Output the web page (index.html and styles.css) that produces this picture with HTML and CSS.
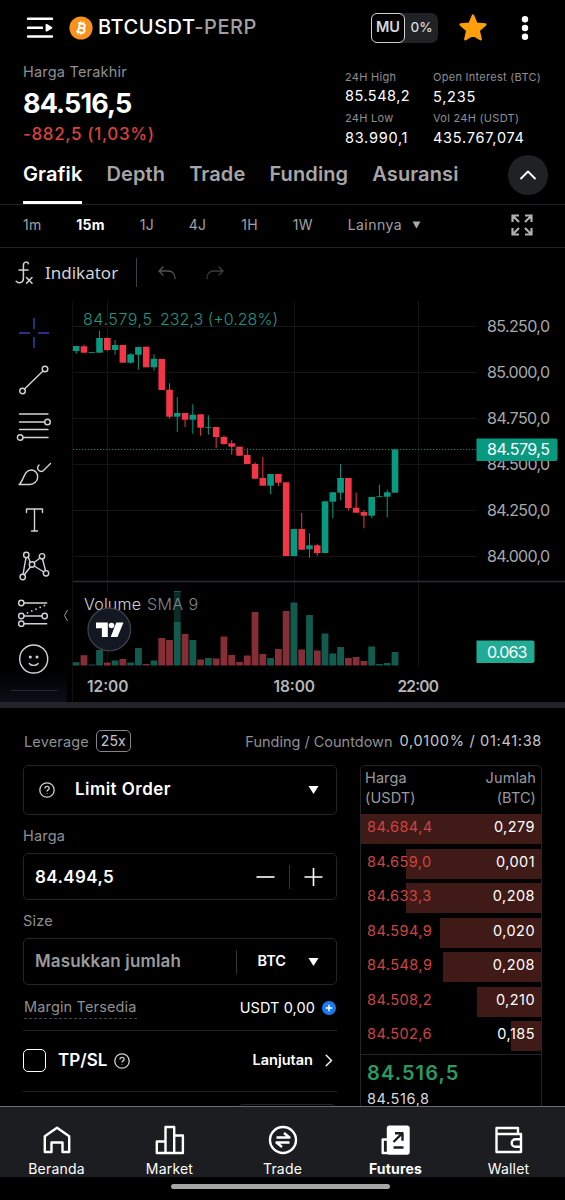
FILE: index.html
```html
<!DOCTYPE html>
<html lang="id">

<head>
    <meta charset="UTF-8">
    <meta name="viewport" content="width=device-width, initial-scale=1.0">
    <title>BTCUSDT-PERP</title>
    <link rel="stylesheet" href="styles.css">
</head>

<body>

    <header class="topbar">
        <svg class="menu-icon" width="28" height="22" viewBox="0 0 28 22">
            <path d="M2 1.8h24M2 10.7h14M2 19.5h24" stroke="#fff" stroke-width="2.4" stroke-linecap="round" />
            <path d="M20.500 7.700v6l5-3z" fill="#fff" stroke="#fff" stroke-width="1.800" stroke-linejoin="round" />
        </svg>
        <svg class="coin-icon" width="24" height="24" viewBox="0 0 24 24">
            <circle cx="12" cy="12" r="11.600" fill="#f7931a" />
            <g transform="rotate(13 12 12)" fill="none" stroke="#fff" stroke-width="1.9">
                <path d="M8 7.600h5.200a2 2 0 0 1 0 4.200H9.800M9.800 11.800h4a2.300 2.300 0 0 1 0 4.600H8M9.900 7.600v8.800" />
                <path d="M10.700 5.200v2.400M13.300 5.200v2.400M10.700 16.400v2.400M13.300 16.400v2.400" stroke-width="1.300" />
            </g>
        </svg>
        <h1 class="pair">BTCUSDT<span>-PERP</span></h1>
        <div class="mu"><b>MU</b><span>0%</span></div>
        <svg class="star" width="30" height="30" viewBox="0 0 30 30">
            <path d="M15 2.500l3.500 8.200 8.900.8-6.700 5.900 2 8.800-7.700-4.600-7.700 4.600 2-8.800-6.700-5.900 8.900-.8z" fill="#ff9f0a" stroke="#ff9f0a" stroke-width="2.400" stroke-linejoin="round" />
        </svg>
        <svg class="dots" width="8" height="26" viewBox="0 0 8 26">
            <g fill="#fff"><circle cx="4" cy="4.300" r="3.200" /><circle cx="4" cy="13" r="3.200" /><circle cx="4" cy="21.700" r="3.200" /></g>
        </svg>
    </header>

    <section class="summary">
        <div class="last">
            <div class="last-label">Harga Terakhir</div>
            <div class="last-price">84.516,5</div>
            <div class="last-change">-882,5 (1,03%)</div>
        </div>
        <div class="stats">
            <div class="stat"><span>24H High</span><b class="up">85.548,2</b></div>
            <div class="stat"><span>Open Interest (BTC)</span><b>5,235</b></div>
            <div class="stat"><span>24H Low</span><b>83.990,1</b></div>
            <div class="stat"><span>Vol 24H (USDT)</span><b>435.767,074</b></div>
        </div>
    </section>

    <nav class="tabs">
        <a class="tab active">Grafik</a>
        <a class="tab">Depth</a>
        <a class="tab">Trade</a>
        <a class="tab">Funding</a>
        <a class="tab">Asuransi</a>
        <button class="collapse">
            <svg width="18" height="10" viewBox="0 0 18 10"><path d="M2 8.500l7-7 7 7" fill="none" stroke="#fff" stroke-width="1.800" stroke-linecap="round" stroke-linejoin="round" /></svg>
        </button>
    </nav>

    <div class="intervals">
        <span>1m</span>
        <span class="active">15m</span>
        <span>1J</span>
        <span>4J</span>
        <span>1H</span>
        <span>1W</span>
        <span class="more">Lainnya</span>
        <svg width="9" height="8" viewBox="0 0 9 8"><path d="M.500.500h8l-4 7z" fill="#a9a9ab" /></svg>
        <svg class="expand" width="24" height="24" viewBox="0 0 24 24" fill="none" stroke="#b0b0b2" stroke-width="2.200">
            <path d="M2.500 9V2.500H9M2.500 2.500l6.500 6.500M15 2.500h6.500V9M21.500 2.500L15 9M2.500 15v6.500H9M2.500 21.500L9 15M15 21.500h6.500V15M21.500 21.500L15 15" />
        </svg>
    </div>

    <div class="chart-bar">
        <svg width="20" height="26" viewBox="0 0 20 26" fill="none" stroke="#d2d3d6" stroke-width="1.500" stroke-linecap="round">
            <path d="M13.500 3.800C12.500 1.200 8.400 1.400 8.400 5.500v13c0 4.500-5 5.300-7.200 2.800M4 10h9M11.500 17.500l5.500 5.800M17 17.500l-5.500 5.800" />
        </svg>
        <span class="indicator">Indikator</span>
        <i class="sep"></i>
        <svg class="undo" width="18" height="14" viewBox="0 0 18 14" fill="none" stroke="#55565a" stroke-width="1.300" stroke-linecap="round">
            <path d="M5 1L1 5l4 4M1 5h9.500c4 0 6.500 3 6.500 7.500" />
        </svg>
        <svg width="18" height="14" viewBox="0 0 18 14" fill="none" stroke="#3c3d41" stroke-width="1.300" stroke-linecap="round">
            <path d="M13 1l4 4-4 4M17 5H7.500C3.500 5 1 8 1 12.500" />
        </svg>
    </div>

    <div class="chart-area">
        <aside class="tools">
            <svg viewBox="0 0 36 36" class="cross"><path d="M18 3v11M18 22v11M3 18h11M22 18h11" /></svg>
            <svg viewBox="0 0 36 36"><path d="M8.500 27L27 9" /><circle cx="6.500" cy="29" r="2.800" /><circle cx="29" cy="7" r="2.800" /></svg>
            <svg viewBox="0 0 36 36"><path d="M3.500 6H32M3.500 14h25.200M3.500 21.500H32M7 29.500h25" /><circle cx="31.500" cy="14" r="2.800" /><circle cx="4.200" cy="29.500" r="2.800" /></svg>
            <svg viewBox="0 0 36 36"><path d="M3 29.500C8 26 7.500 15 15.300 15c3.700 0 6.400 3 6.400 6.700 0 4.400-3.500 7.800-8 7.800zM34.500 8.500L27.500 15.500c-3 2.700-8.500-1.500-4.500-5.500" /></svg>
            <svg viewBox="0 0 36 36"><path d="M10.500 11.500V8h16v3.500M18.500 8v22M15.500 30h6" /></svg>
            <svg viewBox="0 0 36 36"><path d="M10 9.700L7 26.300M12.200 9l2 5M24 10l-5.800 4.500M14.500 18.700L8.300 26.800M18.200 18l9.500 6M26.500 11l3 11.700" /><circle cx="10.300" cy="7" r="2.700" /><circle cx="26" cy="8.300" r="2.700" /><circle cx="16" cy="16.500" r="2.700" /><circle cx="6.700" cy="29" r="2.700" /><circle cx="30" cy="25.300" r="2.700" /></svg>
            <svg viewBox="0 0 36 36"><path d="M8 9h22.700M8 22h18M8 29.700h22.700" /><path d="M11.500 18.800L28.500 11.500" stroke-width="1.700" stroke-dasharray=".1 4.500" /><circle cx="5.300" cy="9" r="2.700" /><circle cx="5.300" cy="22" r="2.700" /><circle cx="28.700" cy="22" r="2.700" /><circle cx="5.300" cy="29.700" r="2.700" /></svg>
            <svg viewBox="0 0 36 36"><circle cx="17.700" cy="18" r="14" /><path d="M13.300 22.500c1.800 2.500 7 2.500 8.800 0" /><g class="eyes"><circle cx="14.300" cy="16" r="1.500" /><circle cx="21" cy="16" r="1.500" /></g></svg>
            <i class="tools-line"></i>
        </aside>
        <!-- the viewBox starts at the chart's own corner in page units -->
        <svg class="chart" width="503" height="401" viewBox="62 301 503 401">
            <path d="M72.500 301V702" stroke="#0f1012" />
            <path d="M73 326.500H476M73 372.500H476M73 418.500H476M73 464.500H476M73 510.500H476M73 556.500H476M107.500 301V666M294.500 301V666M418.500 301V666" stroke="#141517" />
            <path d="M73 581.500H565" stroke="#2b2c31" stroke-width="1.600" />
            <g id="volume"></g>
            <rect x="80" y="592" width="122" height="30" fill="#000" opacity=".5" />
            <g id="candles"></g>
            <path d="M73 449.500H476" stroke="#14806c" stroke-dasharray="1.200 1.800" />
            <path d="M67.500 610l-3 5.500 3 5.500" fill="none" stroke="#9b9ca0" />

            <g class="legend">
                <text x="83" y="325" textLength="69" fill="#1c9a83">84.579,5</text>
                <text x="160" y="325" textLength="118" fill="#1c9a83">232,3 (+0.28%)</text>
                <text x="84" y="610" textLength="57" fill="#d2d3d6">Volume</text>
                <text x="147" y="610" textLength="51" fill="#85868b">SMA 9</text>
            </g>

            <circle cx="109.300" cy="629.500" r="21.300" fill="#131722" stroke="#3f4148" stroke-width="1.300" />
            <g fill="#fff">
                <path d="M96 622.600h11.800v14.500h-5.900v-8.800H96z" />
                <circle cx="111.500" cy="625.500" r="2.800" />
                <path d="M116.300 622.600h7.200l-6 14.500h-6.800z" />
            </g>

            <g class="prices">
                <text x="487" y="332" textLength="63">85.250,0</text>
                <text x="487" y="378" textLength="63">85.000,0</text>
                <text x="487" y="424" textLength="63">84.750,0</text>
                <text x="487" y="470" textLength="63">84.500,0</text>
                <text x="487" y="516" textLength="63">84.250,0</text>
                <text x="487" y="562" textLength="63">84.000,0</text>
            </g>
            <path d="M476.500 438.500h79a2 2 0 0 1 2 2v18.500a2 2 0 0 1-2 2h-79z" fill="#089981" />
            <text class="tag" x="487" y="455.200" textLength="63">84.579,5</text>
            <path d="M476.500 640.500h56a2 2 0 0 1 2 2V661a2 2 0 0 1-2 2h-56z" fill="#22ab94" />
            <text class="tag" x="487" y="657.500" textLength="40.500">0.063</text>

            <g class="times">
                <text x="87" y="691.500" textLength="41.500">12:00</text>
                <text x="273.500" y="691.500" textLength="41.500">18:00</text>
                <text x="397.500" y="691.500" textLength="41.500">22:00</text>
            </g>
        </svg>
    </div>

    <main class="order">
        <div class="order-head">
            <span class="lev">Leverage</span>
            <span class="lev-value">25x</span>
            <span class="funding">Funding / Countdown</span>
            <span class="countdown">0,0100% / 01:41:38</span>
        </div>

        <div class="columns">
            <div class="form">
                <div class="field type">
                    <svg class="help" viewBox="0 0 16 16"><circle cx="8" cy="8" r="7.200" /><path d="M6 6.400c0-2.600 4.100-2.600 4.100 0 0 1.500-2.100 1.500-2.100 3.200M8 11.300v.500" /></svg>
                    <span class="type-name">Limit Order</span>
                    <svg class="caret" viewBox="0 0 12 10"><path d="M1 1h10L6 9z" /></svg>
                </div>
                <label class="label">Harga</label>
                <div class="field">
                    <span class="value">84.494,5</span>
                    <svg class="step" viewBox="0 0 20 20"><path d="M.500 10h19" /></svg>
                    <i class="split"></i>
                    <svg class="step" viewBox="0 0 20 20"><path d="M.500 10h19M10 .500v19" /></svg>
                </div>
                <label class="label">Size</label>
                <div class="field size">
                    <span class="placeholder">Masukkan jumlah</span>
                    <i class="split"></i>
                    <span class="unit">BTC</span>
                    <svg class="caret" viewBox="0 0 12 10"><path d="M1 1h10L6 9z" /></svg>
                </div>
                <div class="margin">
                    <span class="margin-name">Margin Tersedia</span>
                    <span class="margin-value">USDT 0,00</span>
                    <svg width="14" height="14" viewBox="0 0 14 14"><circle cx="7" cy="7" r="7" fill="#1a7bf0" /><path d="M7 3.700v6.600M3.700 7h6.600" stroke="#fff" stroke-width="1.500" /></svg>
                </div>
                <div class="tpsl">
                    <i class="check"></i>
                    <span class="tpsl-name">TP/SL</span>
                    <svg class="help" viewBox="0 0 16 16"><circle cx="8" cy="8" r="7.200" /><path d="M6 6.400c0-2.600 4.100-2.600 4.100 0 0 1.500-2.100 1.500-2.100 3.200M8 11.300v.500" /></svg>
                    <span class="advanced">Lanjutan</span>
                    <svg width="8" height="13" viewBox="0 0 8 13"><path d="M1.200 1.200l5.300 5.300-5.300 5.300" fill="none" stroke="#fff" stroke-width="1.400" stroke-linecap="round" /></svg>
                </div>
                <div class="next"></div>
            </div>

            <div class="book">
                <div class="book-head">
                    <span>Harga<br>(USDT)</span>
                    <span class="right">Jumlah<br>(BTC)</span>
                </div>
                <div class="ask" style="background-size: 100% 100%"><span>84.684,4</span><b>0,279</b></div>
                <div class="ask" style="background-size: 75% 100%"><span>84.659,0</span><b>0,001</b></div>
                <div class="ask" style="background-size: 75% 100%"><span>84.633,3</span><b>0,208</b></div>
                <div class="ask" style="background-size: 56.3% 100%"><span>84.594,9</span><b>0,020</b></div>
                <div class="ask" style="background-size: 54.6% 100%"><span>84.548,9</span><b>0,208</b></div>
                <div class="ask" style="background-size: 35.6% 100%"><span>84.508,2</span><b>0,210</b></div>
                <div class="ask" style="background-size: 16.8% 100%"><span>84.502,6</span><b>0,185</b></div>
                <div class="mid">
                    <div class="mid-price">84.516,5</div>
                    <div class="mark">84.516,8</div>
                </div>
            </div>
        </div>
    </main>

    <footer class="bottom-nav">
        <a>
            <svg viewBox="0 0 32 32"><path d="M3.800 28V12.300L16 3.800l12.200 8.500V28h-6.700v-9.500h-11V28z" /></svg>
            <span>Beranda</span>
        </a>
        <a>
            <svg viewBox="0 0 32 32"><path d="M2.800 29V17.500h8.700V29zM11.500 29V3h8.700v26zM20.200 29V11.500h8.700V29z" /></svg>
            <span>Market</span>
        </a>
        <a>
            <svg viewBox="0 0 32 32"><circle cx="16" cy="16" r="13" /><path d="M9.500 13.500h13L17 9M22.500 18.500h-13L15 23" /></svg>
            <span>Trade</span>
        </a>
        <a class="active">
            <svg viewBox="0 0 32 32"><path d="M7 15.500H2.700V29H10" /><rect x="8" y="2.800" width="20.500" height="26.700" rx="1.500" fill="#fff" /><path class="cut" d="M13.500 18l8.500-8.500M15 9.200h7.500v7.500M13.500 23.500h10" /></svg>
            <span>Futures</span>
        </a>
        <a>
            <svg viewBox="0 0 32 32"><path d="M25 10V4H3.500v24H28V10H3.500M28 15.200h-5.500a3.800 3.800 0 0 0 0 7.600H28" /></svg>
            <span>Wallet</span>
        </a>
    </footer>
    <div class="home-bar"><i></i></div>

    <script src="chart.js"></script>
</body>

</html>
```
FILE: styles.css
```css
* {
    margin: 0;
    padding: 0;
    box-sizing: border-box;
    font-family: Inter, sans-serif;
}

body {
    width: 565px;
    height: 1200px;
    overflow: hidden;
    background: #000;
    color: #fff;
}

svg {
    display: block;
    flex: none;
}

span, b, i {
    white-space: nowrap;
}

/* header */
.topbar {
    display: flex;
    align-items: center;
    height: 56px;
    padding: 0 36px 0 26px;
}

.coin-icon {
    margin-left: 14.5px;
}

.pair {
    margin: -2px 0 0 5.5px;
    font-size: 20px;
    font-weight: 500;
    letter-spacing: 0.55px;
}

.pair span {
    color: #a0a0a2;
}

.mu {
    display: flex;
    align-items: center;
    width: 67px;
    height: 30px;
    margin-left: auto;
    border-radius: 7px;
    background: #202226;
    color: #d8d8da;
    font-size: 14.5px;
}

.mu b {
    width: 34px;
    height: 30px;
    border: 1px solid #d0d0d2;
    border-radius: 6px;
    background: #000;
    font-weight: 600;
    line-height: 26px;
    text-align: center;
}

.mu span {
    width: 33px;
    font-size: 13.5px;
    font-weight: 500;
    line-height: 16px;
    margin-bottom: 2px;
    text-align: center;
}

.star {
    margin-left: 20px;
}

.dots {
    margin-left: 33px;
}

/* summary */
.summary {
    display: flex;
    height: 96px;
    padding-left: 23px;
}

.last {
    width: 322px;
    padding-top: 6px;
}

.last-label {
    color: #8f8f92;
    font-size: 14.5px;
    line-height: 20px;
    letter-spacing: 0.2px;
}

.last-price {
    font-size: 27px;
    font-weight: 700;
    line-height: 43px;
    letter-spacing: -0.9px;
}

.last-change {
    margin-top: -1px;
    color: #d8423e;
    font-size: 17px;
    font-weight: 500;
    line-height: 20px;
    letter-spacing: 0.65px;
}

.stats {
    display: grid;
    grid-template-columns: 88px 1fr;
    grid-template-rows: 41px 41px;
    padding-top: 12px;
}

.stat span, .stat b {
    display: block;
}

.stat span {
    color: #8f8f92;
    font-size: 11px;
    line-height: 19px;
    letter-spacing: 0.28px;
}

.stat b {
    font-size: 14.5px;
    font-weight: 400;
    line-height: 20px;
    letter-spacing: 0.75px;
}

.stat .up {
    margin-top: -1px;
    letter-spacing: 0.5px;
}

/* tabs */
.tabs {
    display: flex;
    gap: 24px;
    height: 53px;
    padding: 0 17.5px 0 23px;
    border-bottom: 1px solid #202124;
}

.tab {
    height: 52px;
    color: #a6a6a8;
    font-size: 20px;
    font-weight: 600;
    line-height: 45px;
    letter-spacing: 0.12px;
}

.tab.active {
    border-bottom: 3px solid #fff;
    color: #fff;
}

.collapse {
    display: flex;
    align-items: center;
    justify-content: center;
    width: 40px;
    height: 40px;
    margin: 3px 0 0 auto;
    border: none;
    border-radius: 50%;
    background: #1f2125;
}

.intervals {
    display: flex;
    align-items: center;
    gap: 35px;
    height: 43px;
    padding: 0 31px 3px 23px;
    border-bottom: 1px solid #202124;
    color: #a0a0a2;
    font-size: 14px;
    letter-spacing: 0.2px;
}

.intervals .active {
    color: #fff;
    font-weight: 700;
}

.intervals .more {
    margin-right: -25px;
    letter-spacing: 0.45px;
}

.expand {
    margin-left: auto;
}

/* chart */
.chart-bar {
    display: flex;
    align-items: center;
    height: 53px;
    padding: 0 0 4px 15px;
}

.indicator {
    width: 91px;
    margin-left: 10px;
    color: #d2d3d6;
    font-family: "Noto Sans", sans-serif;
    font-size: 17px;
}

.sep {
    width: 1px;
    height: 29px;
    background: #3f4045;
}

.undo {
    margin: 0 30px 0 21px;
}

.chart-area {
    display: flex;
    height: 401px;
}

.tools {
    display: flex;
    flex-direction: column;
    align-items: center;
    width: 67px;
    padding: 14px 0 0 1px;
    background: linear-gradient(#000 92%, #0b0e17);
}

.tools svg {
    width: 36px;
    height: 36px;
    margin-bottom: 10.5px;
    fill: none;
    stroke: #d2d3d6;
    stroke-width: 1.4;
    stroke-linecap: round;
    stroke-linejoin: round;
}

.tools .cross {
    stroke: #2a46b8;
    stroke-linecap: butt;
}

.tools .eyes {
    fill: #d2d3d6;
    stroke: none;
}

.tools-line {
    width: 47px;
    height: 1px;
    margin-top: 3px;
    background: #232733;
}

.chart {
    margin-left: -5px;
}

.legend, .prices, .tag {
    font-size: 16px;
}

.legend {
    font-weight: 350;
}

.prices {
    fill: #a7a8ac;
}

.tag {
    fill: #fff;
}

.times {
    fill: #b5b6ba;
    font-size: 15.5px;
    font-weight: 600;
}

/* order form */
.order {
    height: 404px;
    padding: 0 23px;
    border-top: 6px solid #222328;
    overflow: hidden;
}

.order-head {
    display: flex;
    align-items: center;
    height: 57px;
    padding: 9px 0 0 1px;
    color: #8f8f92;
    font-size: 14.5px;
    letter-spacing: 0.15px;
}

.lev-value {
    width: 35px;
    height: 22px;
    margin-left: 7px;
    border: 1px solid #858588;
    border-radius: 5px;
    color: #c8c8ca;
    font-size: 14px;
    line-height: 19px;
    text-align: center;
}

.funding {
    margin-left: auto;
    letter-spacing: 0;
}

.countdown {
    margin: -1px 0 0 7px;
    color: #c8c8ca;
    letter-spacing: 0.7px;
}

.columns {
    display: flex;
    justify-content: space-between;
}

.form {
    width: 314px;
}

.field {
    display: flex;
    align-items: center;
    height: 47px;
    padding: 0 13px 0 11px;
    border: 1px solid #242528;
    border-radius: 5px;
    font-size: 17px;
    font-weight: 600;
}

.type {
    height: 50px;
    padding: 0 16px 0 15px;
}

.help {
    width: 16px;
    height: 16px;
    fill: none;
    stroke: #d0d0d2;
    stroke-width: 1.3;
}

.type-name {
    margin: 0 auto 2px 20px;
    letter-spacing: 0.45px;
}

.caret {
    width: 13px;
    height: 10px;
    fill: #fff;
}

.label {
    display: block;
    height: 38px;
    color: #8f8f92;
    font-size: 14.5px;
    line-height: 41px;
    letter-spacing: 0.2px;
}

.value {
    margin-right: auto;
    letter-spacing: 0.4px;
}

.step {
    width: 19px;
    height: 20px;
    stroke: #fff;
    stroke-width: 1.7;
}

.split {
    width: 1px;
    height: 24px;
    margin: 0 14px;
    background: #36373a;
}

.size {
    padding-right: 16px;
}

.placeholder {
    margin: 0 auto 1px 0;
    color: #9a9a9c;
    letter-spacing: 0.15px;
}

.size .split {
    margin: 0 20px;
}

.unit {
    margin: 0 21px 2px 0;
    font-size: 14.5px;
}

.margin {
    display: flex;
    align-items: center;
    height: 46px;
    padding: 0 1px;
    border-bottom: 1px solid #222326;
    font-size: 14.5px;
}

.margin-name {
    margin-right: auto;
    border-bottom: 1px dashed #444;
    color: #8f8f92;
    line-height: 22px;
    letter-spacing: 0.15px;
}

.margin-value {
    margin: 0 7px 1px 0;
    letter-spacing: 0.1px;
}

.tpsl {
    display: flex;
    align-items: center;
    height: 61px;
    padding: 0 4px 1px 0;
    border-bottom: 1px solid #222326;
    font-weight: 600;
}

.check {
    width: 23px;
    height: 23px;
    border: 1.5px solid #fff;
    border-radius: 5px;
}

.tpsl-name {
    margin: 0 7px 1px 12px;
    font-size: 17px;
}

.advanced {
    margin: 0 12px 2px auto;
    font-size: 14.5px;
}

.next {
    width: 100px;
    height: 40px;
    margin: 12px 0 0 214px;
    border: 1px solid #242528;
    border-radius: 6px;
}

/* order book */
.book {
    width: 182px;
    height: 400px;
    border: 1px solid #242528;
    border-radius: 5px;
}

.book-head {
    display: flex;
    justify-content: space-between;
    height: 48px;
    padding: 2px 5px 0 4px;
    color: #9a9a9c;
    font-size: 14.5px;
    line-height: 20px;
    letter-spacing: 0.1px;
}

.right {
    text-align: right;
}

.ask {
    display: flex;
    justify-content: space-between;
    height: 30px;
    margin-bottom: 4.5px;
    padding: 0 6px;
    background: linear-gradient(#401a17, #401a17) no-repeat right;
    color: #cf4440;
    font-size: 14.5px;
    line-height: 26px;
    letter-spacing: 0.45px;
}

.ask b {
    color: #fff;
    font-weight: 400;
}

.mid {
    margin-top: -2px;
    padding: 5px 6px;
    border-top: 1px solid #242528;
}

.mid-price {
    color: #2a9c62;
    font-size: 20px;
    font-weight: 600;
    line-height: 27px;
    letter-spacing: 1.1px;
}

.mark {
    color: #d8d8da;
    font-size: 14.5px;
    line-height: 23px;
    letter-spacing: 0.6px;
}

/* bottom navigation */
.bottom-nav {
    display: flex;
    height: 71px;
    border-top: 1px solid #6a6b6e;
    background: #1b1d21;
}

.bottom-nav a {
    display: flex;
    flex: 1;
    flex-direction: column;
    align-items: center;
    padding-top: 17px;
    font-size: 14px;
}

.bottom-nav svg {
    width: 32px;
    height: 32px;
    margin-bottom: 5px;
    fill: none;
    stroke: #fff;
    stroke-width: 2.4;
    stroke-linejoin: round;
}

.bottom-nav .cut {
    stroke: #1b1d21;
}

.bottom-nav span {
    line-height: 16px;
    letter-spacing: 0.2px;
}

.bottom-nav .active {
    font-weight: 700;
}

.home-bar {
    display: flex;
    justify-content: center;
    height: 23px;
    padding: 7px 4px 0 0;
}

.home-bar i {
    width: 219px;
    height: 5px;
    border-radius: 3px;
    background: #a6a6a6;
}
```
FILE: chart.js
```js
// [up, body top, body bottom, wick top, wick bottom, volume height]
const bars = [
    [1, 346, 351, 346, 353.7, 3.3],
    [0, 346.3, 352.7, 344.7, 352.7, 10.3],
    [1, 352, 352.8, 352, 352.8, 1],
    [1, 338, 352.7, 330.7, 352.7, 15.5],
    [0, 338, 350, 337.3, 351.3, 3],
    [1, 345, 350, 340, 354.7, 5],
    [0, 345, 362.7, 345, 362.7, 6.5],
    [1, 354.3, 362.7, 353.3, 363.3, 3],
    [1, 347, 354.7, 347, 369.7, 17.5],
    [0, 346.7, 367.3, 346.7, 367.3, 1.5],
    [1, 358.7, 367.3, 354.3, 370.7, 5],
    [0, 359, 390, 359, 390, 27.5],
    [0, 389.7, 416.7, 383.3, 418.3, 25.5],
    [1, 413, 416.7, 397, 432, 74.5],
    [0, 413, 419.7, 413, 427, 31.5],
    [1, 414.7, 419.7, 404.3, 433.7, 25.5],
    [0, 414.3, 427.7, 414.3, 435.7, 6],
    [1, 427, 427.8, 415.3, 434.7, 7.5],
    [0, 427, 437, 427, 448.3, 7],
    [0, 437, 444, 435.3, 444.7, 29],
    [0, 443.3, 446.7, 440.3, 454.7, 10.5],
    [0, 446.7, 455.7, 446.7, 455.7, 3.5],
    [0, 455, 464, 448.3, 464, 10],
    [0, 464, 478.7, 462.3, 478.7, 53.5],
    [0, 478, 485.7, 457, 485.7, 11.5],
    [1, 474, 485.7, 474, 494.3, 7.5],
    [0, 474, 482.7, 474, 486, 16.5],
    [0, 482.3, 556, 482.3, 556, 54.5],
    [1, 529, 556, 529, 556, 63],
    [0, 529, 549.7, 513, 549.7, 16],
    [1, 545.3, 549.3, 533.3, 557.7, 50.5],
    [0, 545.3, 553, 543.7, 555.7, 15],
    [1, 501.3, 553, 501.3, 553, 32],
    [1, 492.3, 501.7, 492.3, 518.3, 12],
    [1, 478, 492.7, 464, 500.3, 18.5],
    [0, 478, 508, 478, 510.3, 7.5],
    [0, 507.7, 512.7, 492.7, 512.7, 8.5],
    [0, 512, 515.7, 510.3, 528.3, 4.5],
    [1, 497, 515.7, 497, 518, 19],
    [1, 496.3, 497.1, 484.7, 497, 1.5],
    [1, 492.3, 496.7, 489.7, 517.3, 2.5],
    [1, 449.3, 492.7, 449.3, 492.7, 13.5]
];

const FIRST_X = 76.2;
const STEP = 7.776;
const VOLUME_BASE = 665.5;

function rect(x, y, width, height, fill) {
    const el = document.createElementNS("http://www.w3.org/2000/svg", "rect");
    el.setAttribute("x", x);
    el.setAttribute("y", y);
    el.setAttribute("width", width);
    el.setAttribute("height", height);
    el.setAttribute("fill", fill);
    return el;
}

const candles = document.getElementById("candles");
const volume = document.getElementById("volume");

bars.forEach(([up, top, bottom, high, low, vol], i) => {
    const x = FIRST_X + i * STEP;
    const color = up ? "#089981" : "#f23645";
    candles.append(rect(x - 0.5, high, 1, low - high, color));
    candles.append(rect(x - 3.3, top, 6.6, bottom - top, color));
    volume.append(rect(x - 3.4, VOLUME_BASE - vol, 6.8, vol, up ? "#115c4e" : "#862e35"));
});
```
